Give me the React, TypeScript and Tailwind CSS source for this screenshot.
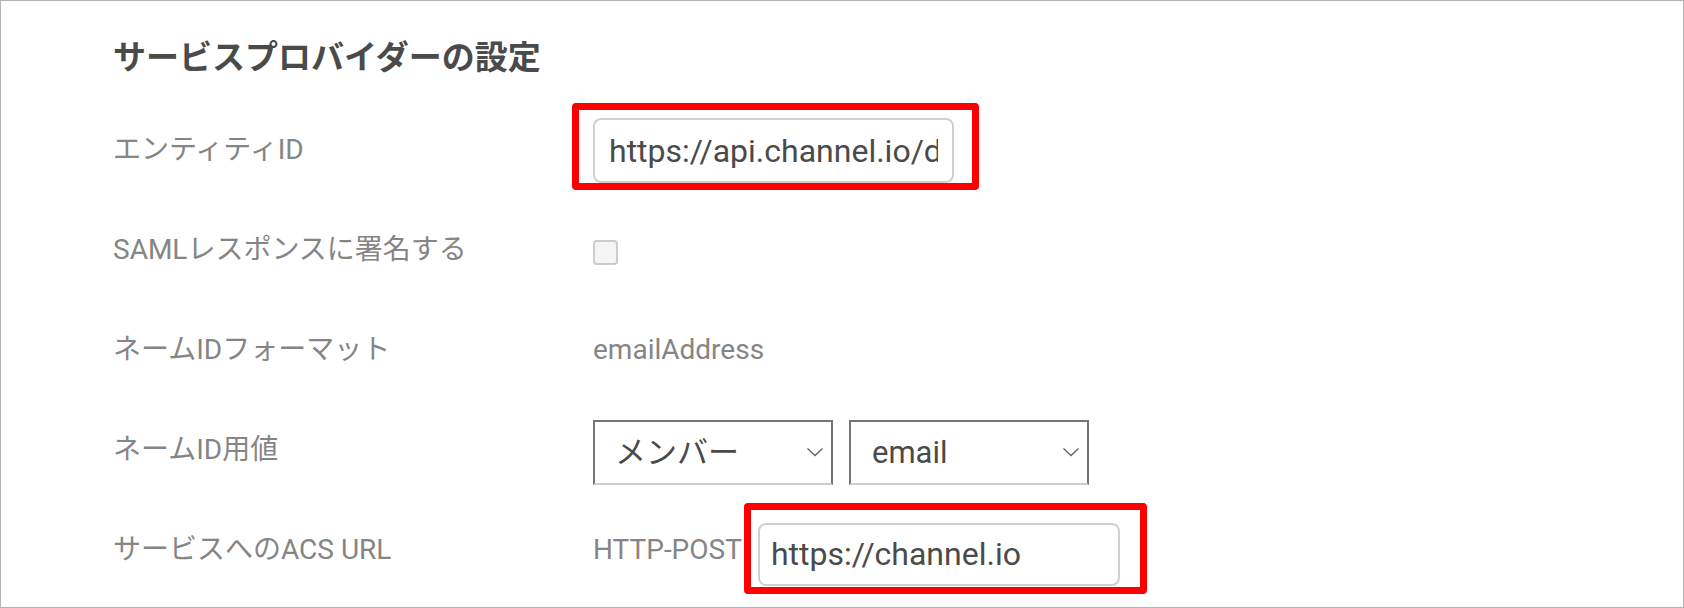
import React from 'react';

// thin chevron used inside the select boxes
const Chevron = () => (
  <svg width="18" height="10" viewBox="0 0 18 10" fill="none" className="shrink-0">
    <path d="M1.5 1.5L9 8.5L16.5 1.5" stroke="#666666" strokeWidth="1.4" />
  </svg>
);

// red annotation frame drawn over a field
const Highlight = ({ className }: { className: string }) => (
  <span
    className={`pointer-events-none absolute rounded-[4px] border-[7px] border-[#ff0000] ${className}`}
  />
);

const Row: React.FC<{ label: string; children: React.ReactNode }> = ({ label, children }) => (
  <div className="flex h-[100px] items-center">
    <div className="w-[480px] shrink-0 text-[28px] leading-none text-[#858585]">{label}</div>
    <div className="flex items-center">{children}</div>
  </div>
);

const FakeSelect: React.FC<{ value: string; pad: string }> = ({ value, pad }) => (
  <div
    className={`flex h-[65px] w-[240px] items-center justify-between border-2 border-[#767676] border-b-[#cdcdcd] bg-white pr-[7px] ${pad}`}
  >
    <span className="text-[31px] leading-none text-[#4a4a4a]">{value}</span>
    <Chevron />
  </div>
);

export default function App() {
  return (
    <div className="h-[608px] w-full border border-[#b3b3b3] bg-white font-['Roboto','Noto_Sans_CJK_JP',sans-serif]">
      <div className="pl-[112px]">
        <div className="h-[99px] pt-[37px]">
          <h2 className="text-[33px] leading-[40px] font-bold text-[#4a4a4a]">
            サービスプロバイダーの設定
          </h2>
        </div>

        <Row label="エンティティID">
          <div className="relative mt-[1px]">
            <input
              readOnly
              value="https://api.channel.io/documents/saml"
              className="h-[65px] w-[361px] rounded-[8px] border-2 border-[#d0d0d0] bg-white px-[14px] text-[32px] text-[#4a4a4a] outline-none"
            />
            <Highlight className="left-[-21px] right-[-25px] top-[-15px] bottom-[-7px]" />
          </div>
        </Row>

        <Row label="SAMLレスポンスに署名する">
          <span className="mt-[4px] block h-[25px] w-[25px] rounded-[4px] border-2 border-[#cccccc] bg-[#f5f5f5]" />
        </Row>

        <Row label="ネームIDフォーマット">
          <span className="text-[28px] leading-none text-[#858585]">emailAddress</span>
        </Row>

        <Row label="ネームID用値">
          <div className="mt-[4px] flex gap-[16px]">
            <FakeSelect value="メンバー" pad="pl-[20px]" />
            <FakeSelect value="email" pad="pl-[21px]" />
          </div>
        </Row>

        <Row label="サービスへのACS URL">
          <span className="text-[28px] leading-none text-[#858585]">HTTP-POST</span>
          <div className="relative ml-[16px] mt-[8px]">
            <input
              readOnly
              value="https://channel.io"
              className="h-[63px] w-[362px] rounded-[8px] border-2 border-[#d0d0d0] bg-white px-[11px] text-[32px] text-[#4a4a4a] outline-none"
            />
            <Highlight className="left-[-14px] right-[-27px] top-[-20px] bottom-[-8px]" />
          </div>
        </Row>
      </div>
    </div>
  );
}
